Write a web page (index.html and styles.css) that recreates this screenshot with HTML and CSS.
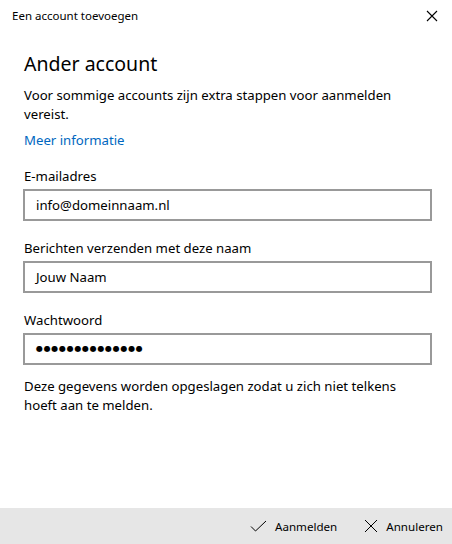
FILE: index.html
```html
<!DOCTYPE html>
<html lang="nl">
<head>
<meta charset="utf-8">
<title>Een account toevoegen</title>
<link rel="stylesheet" href="styles.css">
</head>
<body>
<div class="window">
  <div class="titlebar">
    <span class="title">Een account toevoegen</span>
    <svg class="close" width="12" height="12" viewBox="0 0 12 12"><path d="M1 1L11 11M11 1L1 11" stroke="#000" stroke-width="1.1" fill="none"/></svg>
  </div>
  <main class="content">
    <h1 class="heading">Ander account</h1>
    <p class="intro">Voor sommige accounts zijn extra stappen voor aanmelden vereist.</p>
    <a class="link" href="#">Meer informatie</a>
    <div class="field">
      <label class="label">E-mailadres</label>
      <div class="input">info@domeinnaam.nl</div>
    </div>
    <div class="field">
      <label class="label">Berichten verzenden met deze naam</label>
      <div class="input">Jouw Naam</div>
    </div>
    <div class="field">
      <label class="label">Wachtwoord</label>
      <div class="input dots">●●●●●●●●●●●●●●</div>
    </div>
    <p class="note">Deze gegevens worden opgeslagen zodat u zich niet telkens hoeft aan te melden.</p>
  </main>
  <footer class="footer">
    <button class="btn"><svg width="17" height="12" viewBox="0 0 17 12"><path d="M1 6.5L5.5 11L16 1" stroke="#000" stroke-width="1" fill="none"/></svg><span>Aanmelden</span></button>
    <button class="btn"><svg width="14" height="14" viewBox="0 0 14 14"><path d="M1 1L13 13M13 1L1 13" stroke="#000" stroke-width="1" fill="none"/></svg><span>Annuleren</span></button>
  </footer>
</div>
</body>
</html>
```
FILE: styles.css
```css
html, body {
  margin: 0;
  padding: 0;
  background: #fff;
}
body {
  font-family: "Noto Sans", "Open Sans", sans-serif;
  color: #000;
}
.window {
  width: 452px;
  height: 544px;
  display: flex;
  flex-direction: column;
  overflow: hidden;
}
.titlebar {
  height: 32px;
  display: flex;
  align-items: center;
  justify-content: space-between;
  padding: 0 14px 0 12px;
}
.title {
  font-size: 11.5px;
  margin-top: -1px;
}
.close {
  display: block;
}
.content {
  flex: 1;
  padding: 0 20px 0 24px;
}
.heading {
  font-weight: 400;
  font-size: 19.5px;
  margin: 19px 0 0;
  line-height: 26px;
}
.intro {
  font-size: 13.2px;
  line-height: 19px;
  margin: 9px 0 0;
}
.link {
  display: block;
  font-size: 13.2px;
  line-height: 19px;
  color: #0067c0;
  text-decoration: none;
  margin-top: 7px;
}
.field {
  display: flex;
  flex-direction: column;
  margin-top: 17px;
}
.field + .field {
  margin-top: 18px;
}
.label {
  font-size: 13.2px;
  line-height: 19px;
}
.input {
  margin-top: 3px;
  height: 28px;
  margin-left: -1px;
  border: 2px solid #999;
  box-sizing: content-box;
  padding: 0 11px;
  font-size: 13.2px;
  line-height: 28px;
}
.dots {
  font-family: "DejaVu Sans", sans-serif;
  font-size: 8px;
  letter-spacing: 0.7px;
}
.note {
  font-size: 13.2px;
  line-height: 19px;
  margin: 12px 0 0;
}
.footer {
  height: 36px;
  background: #e6e6e6;
  display: flex;
  justify-content: flex-end;
  align-items: center;
  gap: 27px;
  padding-right: 9px;
}
.btn {
  border: 0;
  background: none;
  padding: 0;
  display: flex;
  align-items: center;
  gap: 8px;
  font-family: inherit;
  font-size: 11.6px;
  color: #000;
}
.btn svg {
  display: block;
}
```
